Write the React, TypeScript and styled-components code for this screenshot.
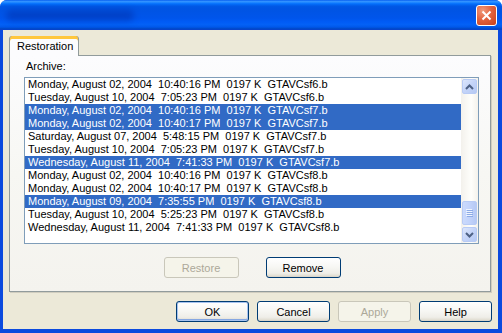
import { FunctionComponent } from "react";
import styled, { createGlobalStyle } from "styled-components";

const GlobalStyle = createGlobalStyle`
  html, body {
    margin: 0;
    padding: 0;
    background: #ffffff;
  }
  body {
    width: 502px;
    height: 333px;
    overflow: hidden;
    font-family: "Liberation Sans", Tahoma, Arial, sans-serif;
    font-size: 11px;
  }
`;

const Window = styled.div`
  width: 502px;
  height: 333px;
  display: flex;
  flex-direction: column;
  background: #0b4ade;
  border-radius: 7px 7px 0 0;
  overflow: hidden;
`;

const TitleBar = styled.div`
  height: 30px;
  flex: none;
  box-sizing: border-box;
  display: flex;
  align-items: flex-start;
  justify-content: space-between;
  padding: 5px 5px 0 6px;
  background: linear-gradient(
    to bottom,
    #0058ee 0%,
    #3593ff 4%,
    #288eff 7%,
    #127dff 10%,
    #036ffc 13%,
    #0262ee 17%,
    #0057e5 22%,
    #0054e3 30%,
    #0055eb 60%,
    #005bf5 72%,
    #0361f6 82%,
    #0058ea 90%,
    #0048c8 96%,
    #0a3fcc 100%
  );
`;

const TitleBlur = styled.span`
  display: block;
  width: 128px;
  height: 11px;
  margin-top: 5px;
  border-radius: 6px;
  background: rgba(0, 30, 140, 0.35);
  filter: blur(3px);
`;

const CloseButton = styled.div`
  width: 21px;
  height: 21px;
  box-sizing: border-box;
  border: 1px solid #ffffff;
  border-radius: 3px;
  display: flex;
  align-items: center;
  justify-content: center;
  background: radial-gradient(
    circle at 30% 25%,
    #f09a7c 0%,
    #e2633f 45%,
    #c8401c 100%
  );
`;

const Client = styled.div`
  flex: 1;
  margin: 0 4px 4px 3px;
  background: #ece9d8;
  display: flex;
  flex-direction: column;
  padding: 6px 6px 7px 6px;
`;

const TabStrip = styled.div`
  display: flex;
  height: 19px;
  position: relative;
  z-index: 1;
`;

const Tab = styled.div`
  width: 70px;
  height: 20px;
  box-sizing: border-box;
  border: 1px solid #919b9c;
  border-top: none;
  border-bottom: none;
  border-radius: 3px 3px 0 0;
  background: #fcfcfe;
  box-shadow: inset 0 3px 0 #ffc73c, inset 0 1px 0 #e68b2c;
  padding: 4px 0 0 7px;
  line-height: 13px;
  color: #000000;
`;

const Panel = styled.div`
  height: 237px;
  box-sizing: border-box;
  border: 1px solid #919b9c;
  box-shadow: 1px 1px 0 #d0cdbf;
  margin-right: 1px;
  background: linear-gradient(to bottom, #fcfcfe 0%, #f7f7f3 50%, #f4f3ee 100%);
  padding: 4px 11px 0 14px;
  display: flex;
  flex-direction: column;
`;

const Label = styled.div`
  line-height: 13px;
  margin: 0 0 4px 2px;
  color: #000000;
`;

const ListBox = styled.div`
  height: 167px;
  box-sizing: border-box;
  border: 1px solid #7f9db9;
  background: #ffffff;
  display: flex;
`;

const Rows = styled.div`
  flex: 1;
  overflow: hidden;
`;

const Row = styled.div<{ $selected?: boolean }>`
  height: 13px;
  line-height: 13px;
  padding-left: 3px;
  white-space: pre;
  color: ${(p) => (p.$selected ? "#ffffff" : "#000000")};
  background: ${(p) => (p.$selected ? "#316ac5" : "transparent")};
`;

const ScrollBar = styled.div`
  width: 17px;
  flex: none;
  display: flex;
  flex-direction: column;
  background: linear-gradient(to right, #f3f1ec 0%, #fefefb 60%, #f4f2ec 100%);
`;

const ScrollButton = styled.div`
  width: 15px;
  height: 15px;
  margin: 1px 1px 0 1px;
  box-sizing: border-box;
  border: 1px solid #b8cbf5;
  border-radius: 2px;
  background: linear-gradient(135deg, #dce6fc 0%, #c4d4f8 50%, #b5c9f4 100%);
  display: flex;
  align-items: center;
  justify-content: center;
  flex: none;
`;

const Track = styled.div`
  flex: 1;
  display: flex;
  flex-direction: column;
  justify-content: flex-end;
`;

const Thumb = styled.div`
  width: 15px;
  height: 24px;
  margin: 0 1px 1px 1px;
  box-sizing: border-box;
  border: 1px solid #b8cbf5;
  border-radius: 2px;
  background: linear-gradient(to right, #cbdafc 0%, #c2d3fb 50%, #b6c9f4 100%);
  display: flex;
  align-items: center;
  justify-content: center;
`;

const ButtonRow = styled.div`
  display: flex;
  justify-content: center;
  gap: 27px;
  margin-top: 13px;
  padding-left: 1px;
`;

const Button = styled.div<{ $disabled?: boolean; $default?: boolean }>`
  width: ${(p) => (p.$default !== undefined ? "73px" : "75px")};
  height: 21px;
  box-sizing: border-box;
  border: 1px solid ${(p) => (p.$disabled ? "#c9c7ba" : "#003c74")};
  border-radius: 3px;
  display: flex;
  align-items: center;
  justify-content: center;
  color: ${(p) => (p.$disabled ? "#aca899" : "#000000")};
  background: ${(p) =>
    p.$disabled
      ? "#f5f4ea"
      : "linear-gradient(to bottom, #ffffff 0%, #f7f7f4 45%, #efeee8 80%, #e3e0d5 92%, #d6d0c5 100%)"};
  box-shadow: ${(p) =>
    p.$default ? "inset 0 0 0 1px #a7c3ef, inset 0 -1px 0 1px #86a7e2" : "none"};
`;

const Footer = styled.div`
  display: flex;
  justify-content: flex-end;
  gap: 8px;
  margin-top: 9px;
`;

const ArrowUp = () => (
  <svg width="9" height="6" viewBox="0 0 9 6">
    <path d="M1 5 L4.5 1.5 L8 5" fill="none" stroke="#4d6185" strokeWidth="2" />
  </svg>
);

const ArrowDown = () => (
  <svg width="9" height="6" viewBox="0 0 9 6">
    <path d="M1 1 L4.5 4.5 L8 1" fill="none" stroke="#4d6185" strokeWidth="2" />
  </svg>
);

const Grip = () => (
  <svg width="7" height="8" viewBox="0 0 7 8">
    {[0, 2, 4, 6].map((y) => (
      <g key={y}>
        <rect x="0" y={y} width="6" height="1" fill="#eef4fe" />
        <rect x="1" y={y + 1} width="6" height="1" fill="#8caae6" />
      </g>
    ))}
  </svg>
);

const CloseX = () => (
  <svg width="11" height="11" viewBox="0 0 11 11">
    <path d="M1.5 1.5 L9.5 9.5 M9.5 1.5 L1.5 9.5" stroke="#ffffff" strokeWidth="2" />
  </svg>
);

const archives: { text: string; selected?: boolean }[] = [
  { text: "Monday, August 02, 2004  10:40:16 PM  0197 K  GTAVCsf6.b" },
  { text: "Tuesday, August 10, 2004  7:05:23 PM  0197 K  GTAVCsf6.b" },
  { text: "Monday, August 02, 2004  10:40:16 PM  0197 K  GTAVCsf7.b", selected: true },
  { text: "Monday, August 02, 2004  10:40:17 PM  0197 K  GTAVCsf7.b", selected: true },
  { text: "Saturday, August 07, 2004  5:48:15 PM  0197 K  GTAVCsf7.b" },
  { text: "Tuesday, August 10, 2004  7:05:23 PM  0197 K  GTAVCsf7.b" },
  { text: "Wednesday, August 11, 2004  7:41:33 PM  0197 K  GTAVCsf7.b", selected: true },
  { text: "Monday, August 02, 2004  10:40:16 PM  0197 K  GTAVCsf8.b" },
  { text: "Monday, August 02, 2004  10:40:17 PM  0197 K  GTAVCsf8.b" },
  { text: "Monday, August 09, 2004  7:35:55 PM  0197 K  GTAVCsf8.b", selected: true },
  { text: "Tuesday, August 10, 2004  5:25:23 PM  0197 K  GTAVCsf8.b" },
  { text: "Wednesday, August 11, 2004  7:41:33 PM  0197 K  GTAVCsf8.b" },
];

const App: FunctionComponent = () => {
  return (
    <>
      <GlobalStyle />
      <Window>
        <TitleBar>
          <TitleBlur />
          <CloseButton>
            <CloseX />
          </CloseButton>
        </TitleBar>
        <Client>
          <TabStrip>
            <Tab>Restoration</Tab>
          </TabStrip>
          <Panel>
            <Label>Archive:</Label>
            <ListBox>
              <Rows>
                {archives.map((a, i) => (
                  <Row key={i} $selected={a.selected}>
                    {a.text}
                  </Row>
                ))}
              </Rows>
              <ScrollBar>
                <ScrollButton>
                  <ArrowUp />
                </ScrollButton>
                <Track>
                  <Thumb>
                    <Grip />
                  </Thumb>
                </Track>
                <ScrollButton style={{ marginBottom: 1 }}>
                  <ArrowDown />
                </ScrollButton>
              </ScrollBar>
            </ListBox>
            <ButtonRow>
              <Button $disabled>Restore</Button>
              <Button>Remove</Button>
            </ButtonRow>
          </Panel>
          <Footer>
            <Button $default>OK</Button>
            <Button $default={false}>Cancel</Button>
            <Button $default={false} $disabled>
              Apply
            </Button>
            <Button $default={false}>Help</Button>
          </Footer>
        </Client>
      </Window>
    </>
  );
};

export default App;
